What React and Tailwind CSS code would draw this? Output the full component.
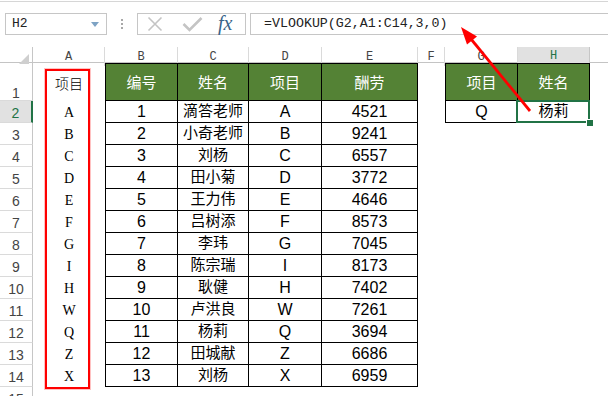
import React from "react";

const COLS = "grid-cols-[33px_72px_73px_71px_73px_96px_27px_73px_72px_1fr]";

const rows = [
  [1, "滴答老师", "A", 4521],
  [2, "小奇老师", "B", 9241],
  [3, "刘杨", "C", 6557],
  [4, "田小菊", "D", 3772],
  [5, "王力伟", "E", 4646],
  [6, "吕树添", "F", 8573],
  [7, "李玮", "G", 7045],
  [8, "陈宗瑞", "I", 8173],
  [9, "耿健", "H", 7402],
  [10, "卢洪良", "W", 7261],
  [11, "杨莉", "Q", 3694],
  [12, "田城献", "Z", 6686],
  [13, "刘杨", "X", 6959],
];

const mono = "[font-family:'Liberation_Mono',monospace]";
const cell = "flex items-center justify-center border-r border-b border-black";
const head = "flex items-center justify-center border-r border-b border-t border-black bg-[#548235] text-white text-[15px] pt-[2px]";

const RowHead = ({ n, active, first }) => (
  <div
    className={`flex items-end justify-center border-b border-[#dadada] text-[14px] leading-[14px] ${
      first ? "pb-0" : "pb-[2px]"
    } ${active ? "bg-[#e1e1e1] text-[#217346] border-r-2 border-r-[#217346]" : "border-r border-r-[#c6c6c6] text-[#444]"}`}
  >
    {n}
  </div>
);

export default function App() {
  return (
    <div className="relative w-[608px] h-[396px] overflow-hidden bg-white text-black [font-family:'Liberation_Sans','Noto_Sans_CJK_SC',sans-serif]">
      {/* top edge */}
      <div className="h-[13px] pt-px">
        <div className="border-t border-[#d6d6d6]" />
      </div>

      {/* formula bar */}
      <div className="flex h-[22px]">
        <div className={`ml-[5px] w-[102px] border border-[#c6c6c6] flex items-center justify-between pl-[6px] pr-[7px] text-[13px] text-[#222] ${mono}`}>
          <span>H2</span>
          <svg width="8" height="5" viewBox="0 0 8 5">
            <path d="M0 0 L8 0 L4 5 Z" fill="#7ea3c4" />
          </svg>
        </div>
        <div className="w-[30px] flex flex-col items-center justify-center gap-[2px]">
          <span className="size-[2px] bg-[#a8a8a8]" />
          <span className="size-[2px] bg-[#a8a8a8]" />
          <span className="size-[2px] bg-[#a8a8a8]" />
        </div>
        <div className="w-[109px] border border-[#c6c6c6] flex items-center pl-[9px]">
          <svg width="16" height="16" viewBox="0 0 16 16">
            <path d="M1.5 1.5 L14.5 14.5 M14.5 1.5 L1.5 14.5" stroke="#c4c4c4" strokeWidth="1.6" />
          </svg>
          <svg className="ml-[19px]" width="21" height="16" viewBox="0 0 21 16">
            <path d="M1.5 8 L7.5 14 L19.5 2" stroke="#c4c4c4" strokeWidth="2.6" fill="none" />
          </svg>
          <span className="ml-[15px] -mt-[2px] italic text-[20px] leading-none text-[#3a6489] [font-family:'Liberation_Serif',serif]">
            fx
          </span>
        </div>
        <div className={`ml-[4px] flex-1 border border-r-0 border-[#c6c6c6] pl-[13px] flex items-center text-[13.3px] text-[#222] ${mono}`}>
          =VLOOKUP(G2,A1:C14,3,0)
        </div>
      </div>

      <div className="h-[12px]" />

      {/* column headers */}
      <div className={`grid ${COLS} h-[16px] border-b border-[#c4c4c4] text-[12px] text-[#444] ${mono}`}>
        <div className="border-r border-[#c6c6c6] flex items-end justify-end pr-[3px] pb-[2px]">
          <svg width="10" height="10" viewBox="0 0 10 10">
            <path d="M10 0 L10 10 L0 10 Z" fill="#cfcfcf" />
          </svg>
        </div>
        {["A", "B", "C", "D", "E", "F", "G"].map((c) => (
          <div key={c} className="border-r border-[#dadada] flex items-center justify-center">
            {c}
          </div>
        ))}
        <div className="bg-[#e1e1e1] text-[#217346] border-r border-[#c6c6c6] border-b-2 border-b-[#217346] flex items-center justify-center -mb-px">
          H
        </div>
        <div />
      </div>

      {/* sheet */}
      <div className={`grid ${COLS} grid-rows-[38px_repeat(14,22px)]`}>
        {/* row 1 */}
        <RowHead n={1} first />
        <div className="flex items-center justify-center pt-[4px] text-[14px] font-light">项目</div>
        <div className={`${head} border-l`}>编号</div>
        <div className={head}>姓名</div>
        <div className={head}>项目</div>
        <div className={head}>酬劳</div>
        <div />
        <div className={`${head} border-l`}>项目</div>
        <div className={head}>姓名</div>
        <div />

        {rows.map(([no, name, item, pay], i) => (
          <React.Fragment key={no}>
            <RowHead n={i + 2} active={i === 0} />
            <div className="flex items-center justify-center text-[14px] [font-family:'Liberation_Serif',serif]">{item}</div>
            <div className={`${cell} border-l text-[16px]`}>{no}</div>
            <div className={`${cell} text-[15px]`}>{name}</div>
            <div className={`${cell} text-[16px]`}>{item}</div>
            <div className={`${cell} text-[16px]`}>{pay}</div>
            <div />
            {i === 0 ? (
              <>
                <div className={`${cell} border-l text-[16px]`}>Q</div>
                <div className={`${cell} relative text-[15px]`}>
                  杨莉
                  <div className="absolute -left-[2px] -top-[1px] -right-[1px] -bottom-[1px] border-2 border-[#217346]" />
                  <div className="absolute -right-[4px] -bottom-[4px] size-[6px] bg-[#217346] outline outline-1 outline-white" />
                </div>
              </>
            ) : (
              <>
                <div />
                <div />
              </>
            )}
            <div />
          </React.Fragment>
        ))}

        <RowHead n={15} />
        <div />
      </div>

      {/* red annotation box around column A */}
      <div className="absolute left-[45px] top-[69px] w-[45px] h-[320px] border-2 border-[#ff0000] shadow-[0_0_0_1px_rgba(255,80,80,0.35)] pointer-events-none" />

      {/* red arrow pointing at the formula */}
      <svg className="absolute left-0 top-0 pointer-events-none" width="608" height="396" viewBox="0 0 608 396">
        <line x1="530" y1="111" x2="471" y2="39" stroke="#f00" strokeWidth="2.8" />
        <path d="M461 27 L477 36.5 L467 44.5 Z" fill="#f00" />
      </svg>
    </div>
  );
}
